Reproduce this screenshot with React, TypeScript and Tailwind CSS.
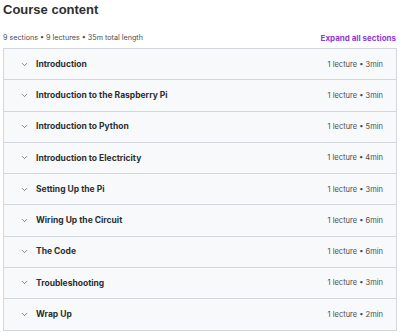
import { ChevronDown } from "lucide-react";

const sections = [
  { title: "Introduction", meta: "1 lecture • 3min" },
  { title: "Introduction to the Raspberry Pi", meta: "1 lecture • 3min" },
  { title: "Introduction to Python", meta: "1 lecture • 5min" },
  { title: "Introduction to Electricity", meta: "1 lecture • 4min" },
  { title: "Setting Up the Pi", meta: "1 lecture • 3min" },
  { title: "Wiring Up the Circuit", meta: "1 lecture • 6min" },
  { title: "The Code", meta: "1 lecture • 6min" },
  { title: "Troubleshooting", meta: "1 lecture • 3min" },
  { title: "Wrap Up", meta: "1 lecture • 2min" },
];

export default function App() {
  return (
    <div className="w-[400px] h-[333px] bg-white overflow-hidden px-[3px] font-['Inter',sans-serif] text-[#2d2f31]">
      {/* Header */}
      <h2 className="text-[13px] leading-[20px] font-bold font-['Liberation_Sans',Arial,sans-serif]">Course content</h2>
      <div className="flex items-end justify-between mt-[10px] h-[16px] pb-[2px]">
        <span className="text-[7.2px] text-[#4b4d50]">9 sections • 9 lectures • 35m total length</span>
        <button className="text-[8px] font-bold text-[#8a3bdb] pr-[1px]">Expand all sections</button>
      </div>

      {/* Sections list */}
      <div className="mt-[2px] border border-[#d1d7dc]">
        {sections.map((s, i) => (
          <div
            key={s.title}
            className={
              "flex items-center h-[31.25px] bg-[#f7f9fa] pl-[16px] pr-[13px] " +
              (i < sections.length - 1 ? "border-b border-[#d1d7dc]" : "")
            }
          >
            <ChevronDown className="w-[9px] h-[9px] text-[#2d2f31]" strokeWidth={1.5} />
            <span className="ml-[7px] flex-1 text-[8.5px] font-bold">{s.title}</span>
            <span className="text-[7.5px] text-[#4b4d50]">{s.meta}</span>
          </div>
        ))}
      </div>
    </div>
  );
}
